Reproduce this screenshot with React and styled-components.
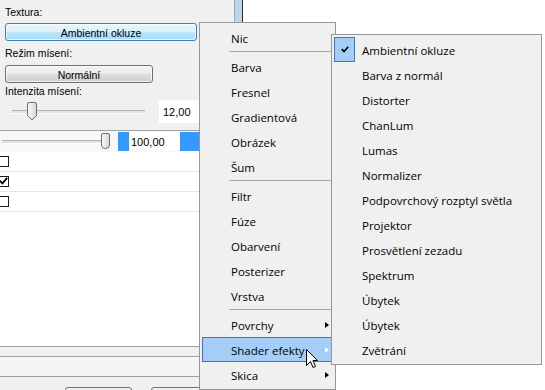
import styled, { createGlobalStyle } from 'styled-components'

const GlobalStyle = createGlobalStyle`
  html, body {
    margin: 0;
    padding: 0;
  }
  body {
    width: 545px;
    height: 390px;
    overflow: hidden;
    background: #fff;
    font-family: "Liberation Sans", Arial, sans-serif;
  }
`

const Screen = styled.div`
  position: relative;
  width: 545px;
  height: 390px;
  display: flex;
  overflow: hidden;
  background: #fff;
`

const SidePanel = styled.div`
  width: 234px;
  display: flex;
  flex-direction: column;
  background: #f0f0f0;
  font-size: 10.5px;
  color: #000;
`

const ScrollEdge = styled.div`
  width: 7px;
  background: #bdd5ed;
  border-left: 1px solid #a7a7a7;
  border-right: 1px solid #2b2b2b;
`

const Props = styled.div`
  box-sizing: border-box;
  height: 131px;
  display: flex;
  flex-direction: column;
  align-items: flex-start;
  padding: 6px 0 0 5px;
  border-bottom: 1px solid #a0a0a0;
`

const Label = styled.div`
  height: 13px;
  line-height: 13px;
  margin-top: ${p => p.$gap || 0}px;
`

const PushButton = styled.div`
  box-sizing: border-box;
  width: ${p => p.$w}px;
  height: 18px;
  margin-top: ${p => p.$gap || 0}px;
  display: flex;
  align-items: center;
  justify-content: center;
  border-radius: 3px;
  border: 1px solid ${p => (p.$hot ? '#3c7fb1' : '#707070')};
  background: ${p =>
    p.$hot
      ? 'linear-gradient(#eaf6fd 0%, #d9f0fc 50%, #bee6fd 51%, #a7d9f5 100%)'
      : 'linear-gradient(#f2f2f2 0%, #ebebeb 50%, #dddddd 51%, #cfcfcf 100%)'};
  box-shadow: inset 0 0 0 1px rgba(255, 255, 255, 0.7);
  padding-top: 1px;
`

const SliderLine = styled.div`
  display: flex;
  align-items: center;
  height: 23px;
  margin-top: 2px;
  align-self: stretch;
`

const Track = styled.div`
  position: relative;
  width: ${p => p.$w}px;
  height: 2px;
  margin-left: ${p => p.$left}px;
  border-top: 1px solid #b4b4b4;
  border-bottom: 1px solid #fdfdfd;
  background: #e3e3e3;
`

const Thumb = styled.svg`
  position: absolute;
  top: ${p => p.$top}px;
  display: block;
`

const NumberBox = styled.div`
  box-sizing: border-box;
  height: 23px;
  flex: 1;
  margin-left: 14px;
  background: #fff;
  display: flex;
  align-items: center;
  padding-left: 4px;
  font-size: 11px;
`

const Grid = styled.div`
  flex: 1;
  display: flex;
  flex-direction: column;
  background: #fff;
`

const WideSliderRow = styled.div`
  height: 21px;
  display: flex;
  align-items: center;
  background: #f8f8f8;
`

const ValueCell = styled.div`
  flex: 1;
  height: 19px;
  margin-left: 8px;
  padding-left: 11px;
  background: #3399ff;
  display: flex;
`

const ValueBox = styled.div`
  width: 49px;
  background: #fff;
  display: flex;
  align-items: center;
  padding-left: 2px;
  font-size: 11px;
`

const CheckRow = styled.div`
  box-sizing: border-box;
  height: 20px;
  display: flex;
  align-items: center;
  border-bottom: 1px solid #e6e6e6;
`

const CheckSquare = styled.div`
  box-sizing: border-box;
  width: 11px;
  height: 11px;
  margin-left: -2px;
  margin-top: -1px;
  border: 1px solid #1a1a1a;
  background: #fff;
  display: flex;
  align-items: center;
  justify-content: center;
`

const Filler = styled.div`
  flex: 1;
`

const Strip = styled.div`
  height: ${p => p.$h}px;
  background: ${p => p.$bg};
  border-top: 1px solid #a0a0a0;
  display: flex;
  align-items: flex-start;
`

const FooterButton = styled.div`
  box-sizing: border-box;
  width: ${p => p.$w}px;
  height: 20px;
  margin-top: 10px;
  margin-left: ${p => p.$left}px;
  border: 1px solid #707070;
  border-radius: 3px;
  background: linear-gradient(#f2f2f2, #cfcfcf);
`

const Blank = styled.div`
  flex: 1;
  background: #fff;
`

const Menu = styled.div`
  position: absolute;
  left: ${p => p.$x}px;
  top: ${p => p.$y}px;
  width: ${p => p.$w}px;
  box-sizing: border-box;
  padding: 2px;
  background: #f0f0f0;
  border: 1px solid #979797;
  font-family: "Open Sans", "Noto Sans", sans-serif;
  font-size: 11.5px;
  color: #000;
`

const MenuItem = styled.div`
  box-sizing: border-box;
  height: 25px;
  display: flex;
  align-items: center;
  padding-left: 28px;
  padding-top: 1px;
  border: 1px solid ${p => (p.$hot ? '#3878c3' : 'transparent')};
  background: ${p => (p.$hot ? '#a4cef7' : 'transparent')};
`

const Arrow = styled.span`
  margin-left: auto;
  margin-right: 3px;
  width: 0;
  height: 0;
  border-top: 3.5px solid transparent;
  border-bottom: 3.5px solid transparent;
  border-left: 4px solid ${p => (p.$hot ? '#fff' : '#000')};
`

const Separator = styled.div`
  height: 4px;
  display: flex;
  flex-direction: column;
  padding-top: 1px;
  box-sizing: border-box;
  &::after {
    content: '';
    height: 1px;
    margin: 0 2px 0 27px;
    background: #a6a6a6;
  }
`

const SubItem = styled.div`
  height: 25px;
  display: flex;
  align-items: center;
`

const CheckCell = styled.div`
  box-sizing: border-box;
  width: 21px;
  height: 25px;
  flex: none;
  display: flex;
  align-items: center;
  justify-content: center;
  border: 1px solid ${p => (p.$on ? '#3878c3' : 'transparent')};
  background: ${p => (p.$on ? '#a4cef7' : 'transparent')};
`

const SubLabel = styled.span`
  margin-left: 7px;
  padding-top: 1px;
`

const Cursor = styled.svg`
  position: absolute;
  left: 306px;
  top: 349px;
  display: block;
`

const mainItems = [
  ['Nic'],
  'sep',
  ['Barva'],
  ['Fresnel'],
  ['Gradientová'],
  ['Obrázek'],
  ['Šum'],
  'sep',
  ['Filtr'],
  ['Fúze'],
  ['Obarvení'],
  ['Posterizer'],
  ['Vrstva'],
  'sep',
  ['Povrchy', true],
  ['Shader efekty', true, true],
  ['Skica', true],
]

const shaderItems = [
  'Ambientní okluze',
  'Barva z normál',
  'Distorter',
  'ChanLum',
  'Lumas',
  'Normalizer',
  'Podpovrchový rozptyl světla',
  'Projektor',
  'Prosvětlení zezadu',
  'Spektrum',
  'Úbytek',
  'Úbytek',
  'Zvětrání',
]

const PointerThumb = ({ left }) => (
  <Thumb $top={-9} width="10" height="19" viewBox="0 0 10 19" style={{ left }}>
    <defs>
      <linearGradient id="tg" x1="0" x2="1" y1="0" y2="0">
        <stop offset="0" stopColor="#fbfbfb" />
        <stop offset="1" stopColor="#d6d6d6" />
      </linearGradient>
    </defs>
    <path d="M2 0.5 H8 Q9.5 0.5 9.5 2 V13.5 L5 18 L0.5 13.5 V2 Q0.5 0.5 2 0.5 Z" fill="url(#tg)" stroke="#6f6f6f" />
  </Thumb>
)

const RoundThumb = ({ left }) => (
  <Thumb $top={-8} width="9" height="16" viewBox="0 0 9 16" style={{ left }}>
    <path d="M2 0.5 H7 Q8.5 0.5 8.5 2 V12 Q8.5 15.5 4.5 15.5 Q0.5 15.5 0.5 12 V2 Q0.5 0.5 2 0.5 Z" fill="url(#tg)" stroke="#6f6f6f" />
  </Thumb>
)

const Tick = ({ w = 9, h = 8 }) => (
  <svg width={w} height={h} viewBox="0 0 9 8">
    <path d="M0.8 3.6 L3.4 6.4 L8.2 0.8" fill="none" stroke="#000" strokeWidth="1.8" />
  </svg>
)

const App = () => {
  return (
    <Screen>
      <GlobalStyle />
      <SidePanel>
        <Props>
          <Label>Textura:</Label>
          <PushButton $w={192} $gap={4} $hot>Ambientní okluze</PushButton>
          <Label $gap={6}>Režim mísení:</Label>
          <PushButton $w={148} $gap={5}>Normální</PushButton>
          <Label $gap={2}>Intenzita mísení:</Label>
          <SliderLine>
            <Track $w={133} $left={7}>
              <PointerThumb left={15} />
            </Track>
            <NumberBox>12,00</NumberBox>
          </SliderLine>
        </Props>
        <Grid>
          <WideSliderRow>
            <Track $w={108} $left={2}>
              <RoundThumb left={99} />
            </Track>
            <ValueCell>
              <ValueBox>100,00</ValueBox>
            </ValueCell>
          </WideSliderRow>
          <CheckRow><CheckSquare /></CheckRow>
          <CheckRow><CheckSquare><Tick /></CheckSquare></CheckRow>
          <CheckRow><CheckSquare /></CheckRow>
          <Filler />
          <Strip $h={9} $bg="#f0f0f0" />
          <Strip $h={19} $bg="#f5f5f5" />
          <Strip $h={13} $bg="#f0f0f0">
            <FooterButton $w={67} $left={65} />
            <FooterButton $w={67} $left={19} />
          </Strip>
        </Grid>
      </SidePanel>
      <ScrollEdge />
      <Blank />

      <Menu $x={199} $y={22} $w={137}>
        {mainItems.map((it, i) =>
          it === 'sep' ? (
            <Separator key={i} />
          ) : (
            <MenuItem key={i} $hot={it[2]}>
              {it[0]}
              {it[1] && <Arrow $hot={it[2]} />}
            </MenuItem>
          )
        )}
      </Menu>

      <Menu $x={331} $y={34} $w={211}>
        {shaderItems.map((name, i) => (
          <SubItem key={i}>
            <CheckCell $on={i === 0}>{i === 0 && <Tick w={8} h={7} />}</CheckCell>
            <SubLabel>{name}</SubLabel>
          </SubItem>
        ))}
      </Menu>

      <Cursor width="13" height="20" viewBox="0 0 13 20">
        <path d="M0.5 0.5 V16.5 L4.5 12.5 L7 18.5 L9.5 17.5 L7 11.5 H11.5 Z" fill="#fff" stroke="#000" strokeLinejoin="miter" />
      </Cursor>
    </Screen>
  )
}

export default App
